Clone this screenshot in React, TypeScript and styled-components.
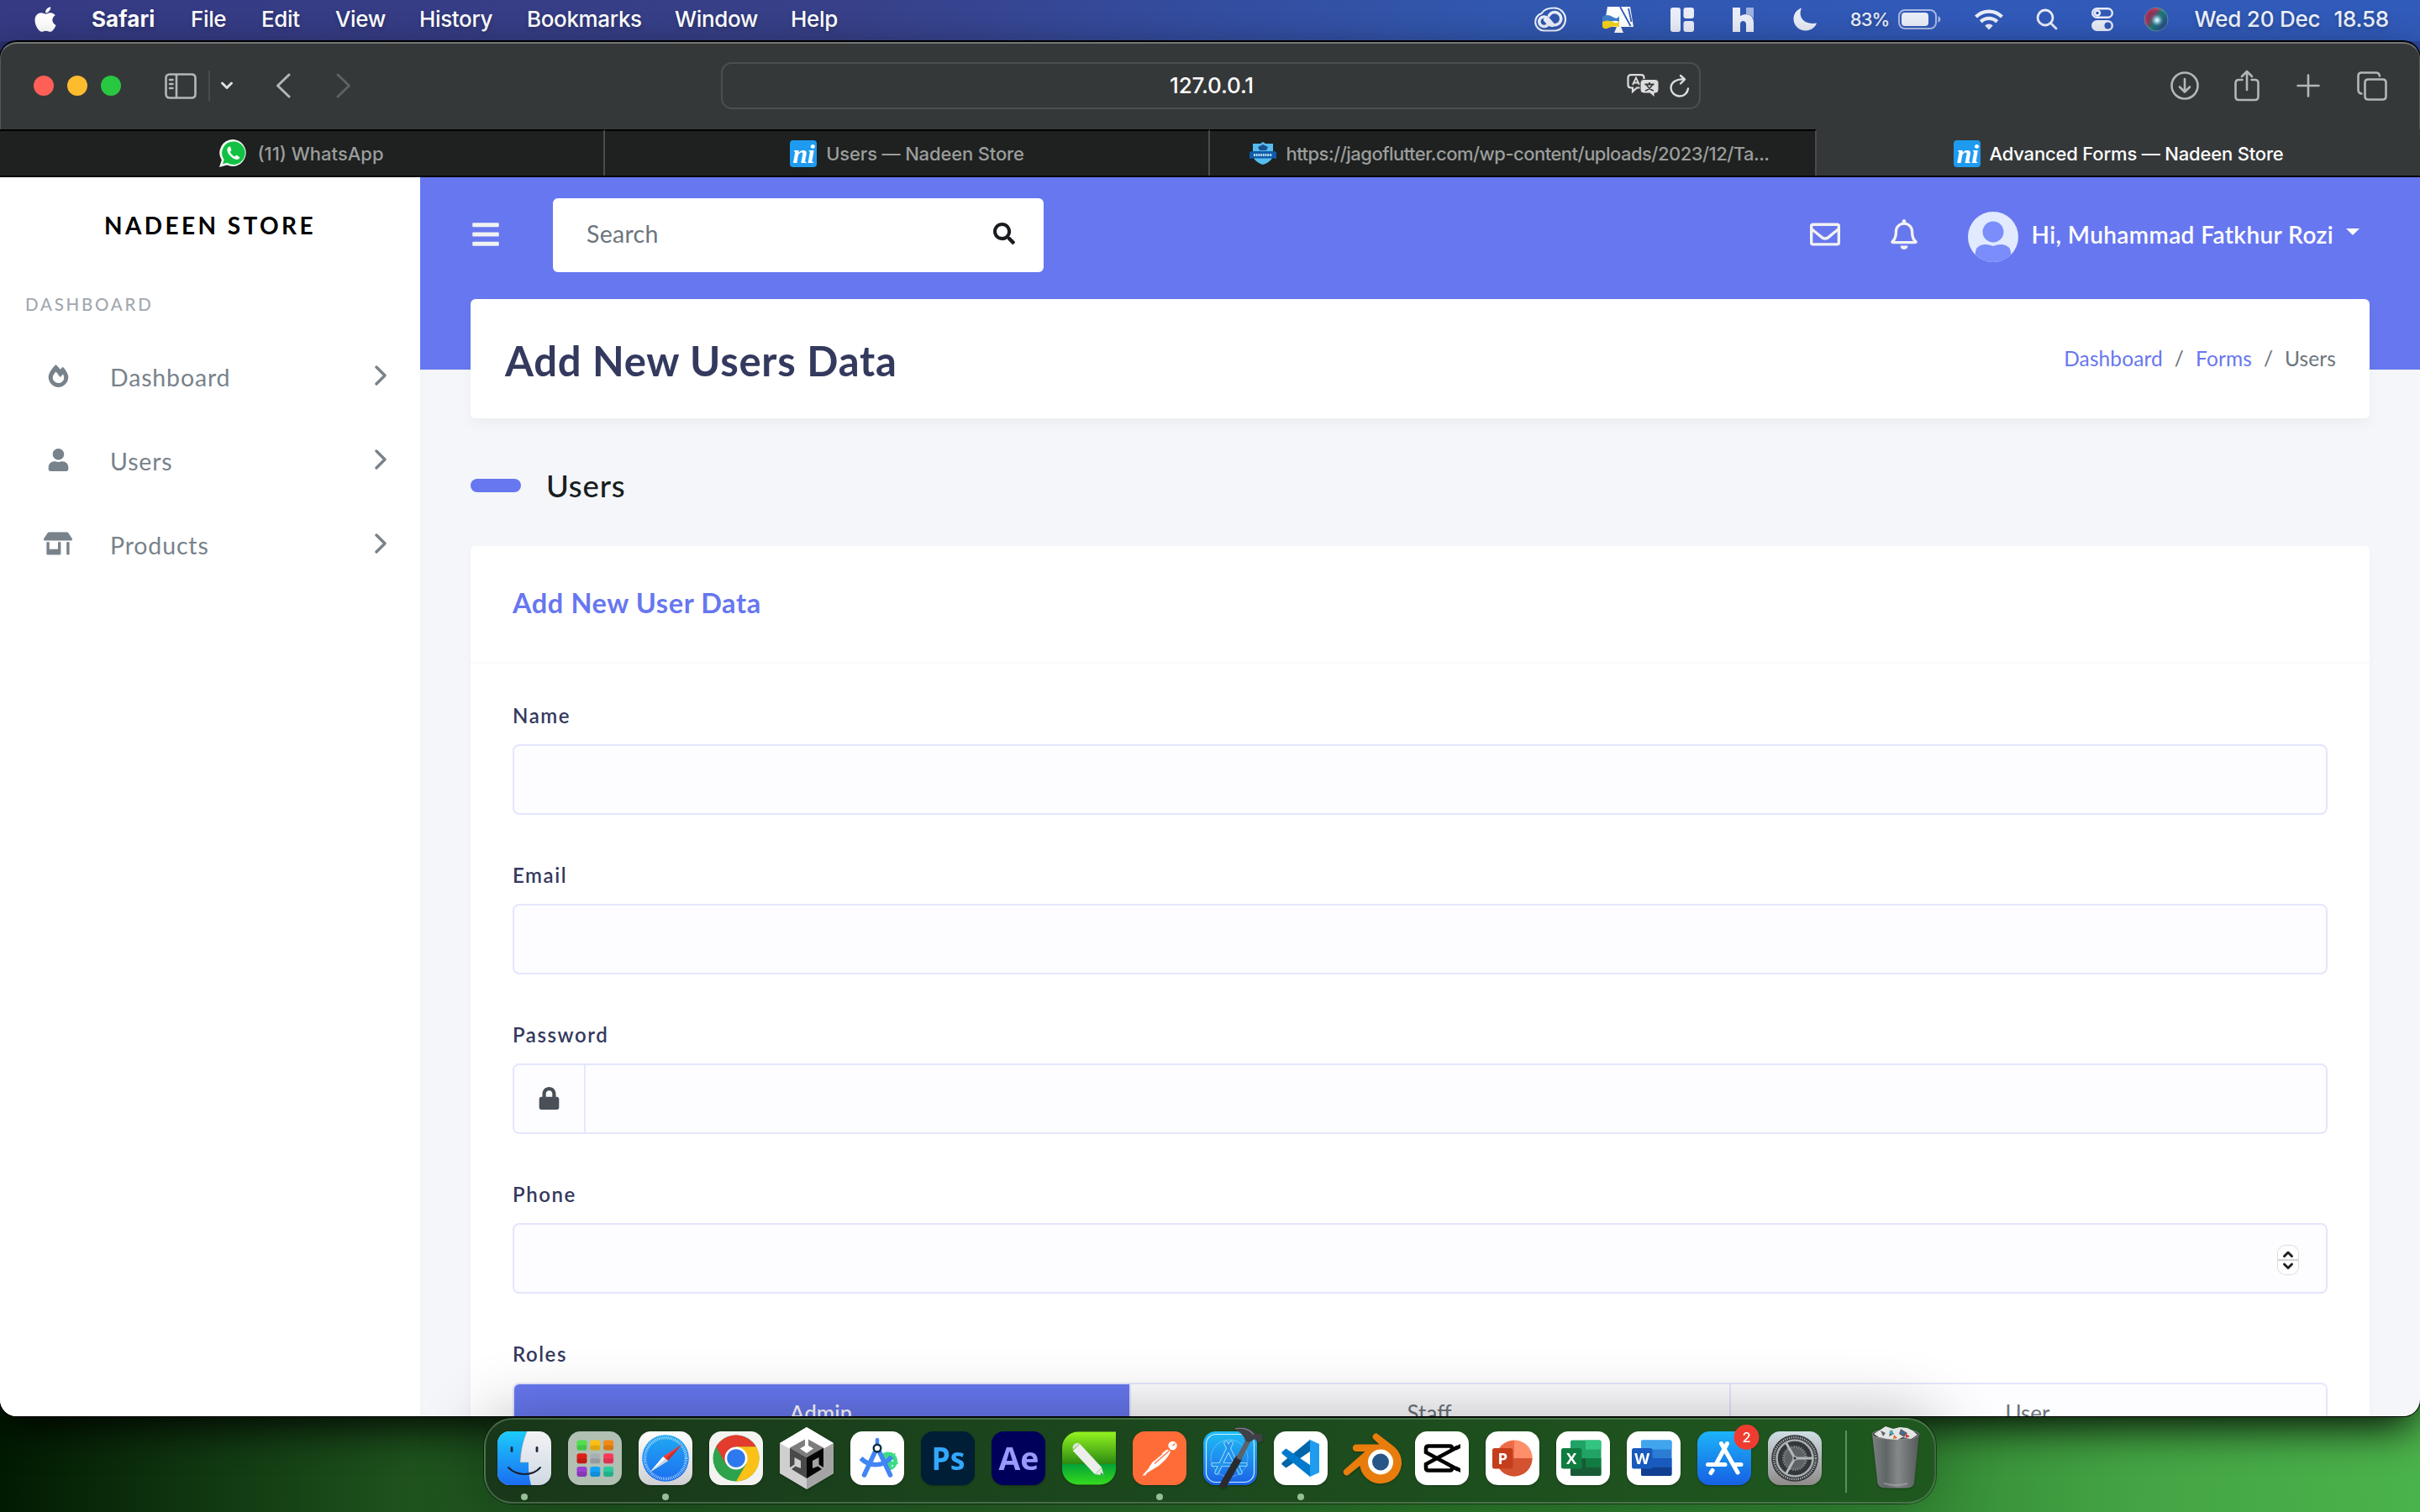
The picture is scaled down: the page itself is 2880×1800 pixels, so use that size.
import React from "react";
import styled, { createGlobalStyle, css } from "styled-components";
import {
  FaApple, FaFireAlt, FaUser, FaStoreAlt, FaSearch, FaBars, FaRegEnvelope, FaRegBell, FaLock,
} from "react-icons/fa";

const ui = `Inter, "Liberation Sans", sans-serif`;
const body = `Lato, "Open Sans", sans-serif`;
const primary = "#6777ef";

const Global = createGlobalStyle`
  *, *::before, *::after { box-sizing: border-box; }
  body { margin: 0; background: #1f4f1f; }
  svg { display: block; flex: none; }
`;

/* ---------- desktop ---------- */
const Desktop = styled.div`
  width: 2880px;
  height: 1800px;
  overflow: hidden;
  display: flex;
  flex-direction: column;
  background:
    linear-gradient(90deg, #2b3070 0, #2b3070 30%, #2d47a0 100%) top / 100% 120px no-repeat,
    linear-gradient(90deg, #011a02 0, #0e330e 7%, #1e531e 17%, #205820 28%, #266026 42%, #2b7a2b 60%, #338834 78%, #43a443 88%, #4bb34b 100%);
`;
const MenuBar = styled.header`
  flex: none;
  height: 49px;
  padding: 0 37px 3px 41px;
  display: flex;
  align-items: center;
  justify-content: space-between;
  background: linear-gradient(90deg, #353a83 0, #374088 35%, #344b9c 48%, #3157ae 62%, #3159b8 80%, #315bba 100%);
  color: #fff;
  font: 500 26px/46px ${ui};
  letter-spacing: -0.35px;
  text-shadow: 0 2px 5px rgba(0, 0, 0, 0.25);
`;
const MenuGroup = styled.div`
  display: flex;
  align-items: center;
`;
const AppleSlot = styled.span`
  width: 72px;
  margin-left: -4px;
`;
const MenuItem = styled.span<{ $w: number; $strong?: boolean }>`
  width: ${(p) => p.$w}px;
  white-space: nowrap;
  ${(p) => p.$strong && css`font-weight: 700; letter-spacing: 0.1px;`}
`;
const StatusIcon = styled.span<{ $gap: number }>`
  margin-right: ${(p) => p.$gap}px;
  color: #e9edf8;
`;
const Percent = styled.span`
  font-size: 22px;
  letter-spacing: -0.9px;
  margin-right: 10px;
  color: #e9edf8;
`;
const Clock = styled.span`
  display: flex;
  gap: 16px;
  white-space: pre;
  letter-spacing: -0.2px;
  color: #eef1fa;
`;

/* ---------- browser window ---------- */
const Window = styled.section`
  flex: none;
  height: 1637px;
  display: flex;
  flex-direction: column;
  border-radius: 20px;
  border-top: 1px solid #000;
  overflow: hidden;
  background: #353839;
  box-shadow: 0 0 0 1px #000, 0 18px 50px -6px rgba(0, 0, 0, 0.95);
`;
const Toolbar = styled.div`
  flex: none;
  height: 104px;
  padding: 0 38px 2px 39px;
  display: flex;
  align-items: center;
  justify-content: space-between;
  color: #b4b7b7;
  border-top: 2px solid #747777;
  border-left: 1px solid #55595a;
  border-right: 1px solid #55595a;
  border-radius: 20px 20px 0 0;
`;
const ToolSide = styled.div<{ $end?: boolean }>`
  width: 700px;
  display: flex;
  align-items: center;
  justify-content: ${(p) => (p.$end ? "flex-end" : "flex-start")};
`;
const Light = styled.i<{ $c: string }>`
  width: 24px;
  height: 24px;
  margin-right: 16px;
  border-radius: 50%;
  background: ${(p) => p.$c};
`;
const Slot = styled.span<{ $l?: number }>`
  margin-left: ${(p) => p.$l ?? 0}px;
`;
const ThinRule = styled.i`
  width: 2px;
  height: 36px;
  margin-left: 14px;
  background: #4a4d4e;
`;
const AddressBar = styled.div`
  width: 1166px;
  height: 56px;
  padding: 0 11px;
  display: grid;
  grid-template-columns: 1fr auto 1fr;
  align-items: center;
  border: 2px solid #4c4f50;
  border-radius: 13px;
  color: #fff;
  font: 500 26px/1 ${ui};
  letter-spacing: -0.15px;
`;
const AddressTools = styled.span`
  grid-column: 3;
  justify-self: end;
  display: flex;
  align-items: center;
  gap: 13px;
`;
const AddressText = styled.span`
  grid-column: 2;
  padding-left: 3px;
`;
const TabStrip = styled.div`
  flex: none;
  height: 57px;
  display: flex;
  border-bottom: 2px solid #050505;
`;
const Tab = styled.div<{ $w: number; $active?: boolean; $ls?: number; $pad?: string }>`
  width: ${(p) => p.$w}px;
  padding: ${(p) => p.$pad ?? "0 0 0 1px"};
  display: flex;
  align-items: center;
  justify-content: center;
  gap: ${(p) => (p.$active ? 10 : 11)}px;
  white-space: nowrap;
  font: 500 22px/54px ${ui};
  letter-spacing: ${(p) => p.$ls ?? 0}px;
  color: ${(p) => (p.$active ? "#fff" : "#9b9d9c")};
  background: ${(p) => (p.$active ? "#353839" : "#1e2120")};
  border-top: 2px solid ${(p) => (p.$active ? "#353839" : "#000")};
  border-right: ${(p) => (p.$active ? "none" : "2px solid #494c4c")};
`;
const Favicon = styled.i`
  width: 32px;
  height: 32px;
  border-radius: 4px;
  background: #1e9bf0;
  color: #fff;
  text-align: center;
  font: italic 700 32px/32px "Liberation Serif", serif;
  letter-spacing: -0.5px;
`;

/* ---------- page ---------- */
const Page = styled.div`
  flex: 1;
  min-height: 0;
  display: flex;
  overflow: hidden;
  background: #f4f6f9;
  font-family: ${body};
`;
const Sidebar = styled.aside`
  width: 500px;
  flex: none;
  background: #fff;
  box-shadow: 0 4px 8px rgba(0, 0, 0, 0.03);
`;
const Brand = styled.div`
  height: 115px;
  font-size: 28px;
  font-weight: 700;
  line-height: 115px;
  letter-spacing: 3.4px;
  text-align: center;
  color: #000;
`;
const MenuHeader = styled.div`
  height: 74px;
  padding-left: 30px;
  font-size: 20.5px;
  font-weight: 500;
  line-height: 73px;
  letter-spacing: 2.75px;
  color: #a1a8af;
`;
const NavItem = styled.a`
  height: 100px;
  padding: 0 40px 6px 41px;
  display: flex;
  align-items: center;
  color: #78828b;
  font-size: 28.5px;
  letter-spacing: 0.85px;
`;
const NavIcon = styled.span`
  width: 56px;
  margin-right: 34px;
  display: flex;
  justify-content: center;
`;
const NavLabel = styled.span`
  flex: 1;
  padding-top: 3px;
`;
const Main = styled.main`
  flex: 1;
  min-width: 0;
  padding: 0 60px;
  background: linear-gradient(${primary} 229px, transparent 229px);
`;
const Navbar = styled.nav`
  height: 145px;
  padding: 0 12px 8px 0;
  display: flex;
  align-items: center;
  color: #f2f2f2;
`;
const NavIconSlot = styled.span<{ $l?: number }>`
  margin: -2px 0 0 ${(p) => p.$l ?? 0}px;
`;
const SearchBox = styled.div`
  width: 584px;
  height: 88px;
  margin: 0 auto 0 62px;
  padding: 0 34px 3px 40px;
  display: flex;
  align-items: center;
  justify-content: space-between;
  border-radius: 6px;
  background: #fff;
  color: #6c757d;
  font-size: 28.5px;
  letter-spacing: 0.3px;
`;
const Account = styled.div`
  display: flex;
  align-items: center;
  margin-left: 58px;
  color: #fff;
  font-size: 28px;
  font-weight: 600;
  letter-spacing: 0.4px;
`;
const AvatarSlot = styled.span`
  padding-top: 5px;
`;
const Greeting = styled.span`
  margin: -2px 15px 0 16px;
`;
const Caret = styled.i`
  margin-top: -7px;
  border: 8px solid transparent;
  border-top-color: #fff;
  border-bottom: 0;
`;
const Panel = styled.section`
  border-radius: 6px;
  background: #fff;
  box-shadow: 0 4px 8px rgba(0, 0, 0, 0.03);
`;
const TitleCard = styled(Panel)`
  height: 142px;
  padding: 0 40px 0 41px;
  display: flex;
  align-items: center;
  justify-content: space-between;
  box-shadow: 0 8px 16px rgba(0, 0, 0, 0.035);
`;
const Title = styled.h1`
  margin: 0;
  padding-top: 3px;
  font-size: 49px;
  font-weight: 700;
  letter-spacing: 0.75px;
  color: #34395e;
`;
const Crumbs = styled.div`
  display: flex;
  gap: 14px;
  margin-top: -2px;
  font-size: 24.5px;
  font-weight: 400;
  letter-spacing: 0.1px;
  color: #6c757d;
`;
const CrumbLink = styled.a`
  color: ${primary};
`;
const SectionTitle = styled.h2`
  height: 152px;
  margin: 0;
  padding-top: 7px;
  display: flex;
  align-items: center;
  gap: 30px;
  font-size: 36.5px;
  font-weight: 500;
  letter-spacing: 0.8px;
  color: #191d21;
  &::before {
    content: "";
    width: 60px;
    height: 16px;
    border-radius: 8px;
    background: ${primary};
  }
`;
const CardHead = styled.div`
  height: 140px;
  padding: 0 50px;
  border-bottom: 2px solid #f9f9f9;
  font-size: 32.5px;
  font-weight: 700;
  line-height: 136px;
  letter-spacing: 0.6px;
  color: ${primary};
`;
const CardBody = styled.div`
  height: 1000px;
  padding: 36px 50px 0;
`;
const Field = styled.div`
  height: 190px;
`;
const Label = styled.label`
  display: block;
  height: 60px;
  font-size: 24px;
  font-weight: 600;
  line-height: 51px;
  letter-spacing: 1.55px;
  color: #34395e;
`;
const Input = styled.div`
  height: 84px;
  padding-right: 33px;
  display: flex;
  align-items: center;
  justify-content: flex-end;
  border: 2px solid #e4e6fc;
  border-radius: 8px;
  background: #fdfdff;
`;
const Addon = styled.span`
  width: 85px;
  height: 80px;
  margin-right: auto;
  padding-bottom: 2px;
  display: flex;
  align-items: center;
  justify-content: center;
  border-right: 2px solid #e4e6fc;
  color: #495057;
`;
const Stepper = styled.span`
  width: 24px;
  height: 34px;
  margin-top: 3px;
  display: flex;
  align-items: center;
  justify-content: center;
  border-radius: 9px;
  background: linear-gradient(#fff 47%, #d4d4d4 47%, #d4d4d4 53%, #fff 53%);
  box-shadow: 0 0 1px 1px rgba(0, 0, 0, 0.14);
`;
const Segments = styled.div`
  height: 84px;
  display: flex;
  border: 2px solid #e4e6fc;
  border-radius: 8px;
  overflow: hidden;
`;
const Segment = styled.span<{ $w: number; $on?: boolean }>`
  width: ${(p) => p.$w}px;
  padding-right: 2px;
  text-align: center;
  font-size: 26px;
  font-weight: ${(p) => (p.$on ? 500 : 400)};
  line-height: 69px;
  color: ${(p) => (p.$on ? "#fff" : "#6c757d")};
  background: ${(p) => (p.$on ? primary : "#fdfdff")};
  & + & { border-left: 2px solid #e4e6fc; }
`;

/* ---------- dock ---------- */
const DockRow = styled.footer`
  position: relative;
  flex: 1;
  display: flex;
  justify-content: center;
  align-items: flex-start;
`;
const DockBar = styled.div`
  width: 1728px;
  height: 102px;
  margin-top: 2px;
  padding: 14px 0 0 14px;
  display: flex;
  gap: 20px;
  border: 2px solid rgba(110, 150, 110, 0.5);
  border-radius: 34px;
  background: linear-gradient(90deg, #19371a, #1b431c 30%, #1d4c1e 60%, #1f581f);
  box-shadow: 0 0 0 1px rgba(0, 0, 0, 0.45), 0 0 80px rgba(0, 0, 0, 0.3);
`;
const DockItem = styled.div<{ $running?: boolean }>`
  width: 64px;
  height: 83px;
  flex: none;
  display: flex;
  flex-direction: column;
  align-items: center;
  justify-content: space-between;
  svg { overflow: visible; }
  ${(p) => p.$running && css`
    &::after {
      content: "";
      width: 8px;
      height: 8px;
      margin-bottom: 1px;
      border-radius: 50%;
      background: #96bf97;
    }
  `}
`;
const DockRule = styled.i`
  width: 2px;
  height: 74px;
  margin: -1px 6px 0 8px;
  background: #5a9159;
`;
const Art = styled.svg.attrs({ viewBox: "0 0 64 64", width: 64, height: 64 })`
  filter: drop-shadow(0 1px 1px rgba(0, 0, 0, 0.3));
`;

const Tile = ({ fill }: { fill: string }) => <rect width="64" height="64" rx="14.5" fill={fill} />;
const Grad = ({ id, a, b }: { id: string; a: string; b: string }) => (
  <linearGradient id={id} x1="0" y1="0" x2="0" y2="1">
    <stop offset="0" stopColor={a} />
    <stop offset="1" stopColor={b} />
  </linearGradient>
);

const Finder = () => (
  <Art>
    <defs>
      <Grad id="fa" a="#1ccbfc" b="#1b6df2" />
      <Grad id="fb" a="#f3f3f5" b="#cfd8e4" />
      <clipPath id="fc"><rect width="64" height="64" rx="14.5" /></clipPath>
    </defs>
    <g clipPath="url(#fc)">
      <rect width="64" height="64" fill="url(#fb)" />
      <path d="M0 0H35C30 12 27.5 24 27 37H37C36.5 46 38 56 40 64H0Z" fill="url(#fa)" />
      <path d="M35 0C30 12 27.5 24 27 37H37" fill="none" stroke="#7d8fa5" strokeOpacity=".5" />
    </g>
    <path d="M17 19.500v4M47 19.500v4" stroke="#1d2a3a" strokeWidth="2.800" strokeLinecap="round" />
    <path d="M13 43C23 53.500 42 53.500 51 43" fill="none" stroke="#16202c" strokeWidth="2" strokeLinecap="round" />
  </Art>
);
const padColors = ["#4fe04c", "#fdbf10", "#f48a16", "#dd1f16", "#a9b0b3", "#fb3b5c", "#9a3fd0", "#12a3f8", "#2cc99a"];
const Launchpad = () => (
  <Art>
    <Tile fill="#b1c0b3" />
    {padColors.map((c, i) => (
      <g key={c}>
        <rect x={10.5 + (i % 3) * 15.8} y={10.5 + Math.floor(i / 3) * 15.7} width="12" height="12" rx="2.800" fill={c} />
        <rect x={10.5 + (i % 3) * 15.8} y={16.5 + Math.floor(i / 3) * 15.7} width="12" height="6" rx="2.800" fill="#000" opacity=".12" />
      </g>
    ))}
  </Art>
);
const Safari = () => (
  <Art>
    <defs><Grad id="sa" a="#fff" b="#d0d0d2" /><Grad id="sb" a="#1fa9f3" b="#1d6ff0" /></defs>
    <Tile fill="url(#sa)" />
    <circle cx="32" cy="32" r="27.800" fill="url(#sb)" />
    <circle cx="32" cy="32" r="24.500" fill="none" stroke="#fff" strokeOpacity=".75" strokeWidth="3.500" strokeDasharray=".8 1.338" />
    <path d="M51.500 15.500L29 30L35 35Z" fill="#f0403a" />
    <path d="M51.500 15.500L32 32.500L35 35Z" fill="#c92c2c" />
    <path d="M13.500 48.500L29 30L35 35Z" fill="#fff" />
    <path d="M13.500 48.500L32 32.500L35 35Z" fill="#c9d3de" />
  </Art>
);
const Chrome = () => (
  <Art>
    <Tile fill="#f3f4f2" />
    <circle cx="32" cy="32" r="27.500" fill="#2fa24c" />
    <path d="M8.200 18.200A27.500 27.500 0 0 1 55.800 18.200H32L20 39Z" fill="#e33b2e" />
    <path d="M55.800 18.200A27.500 27.500 0 0 1 32 59.500L44 39L32 18.200Z" fill="#fcc116" />
    <circle cx="32" cy="32" r="13.500" fill="#fff" />
    <circle cx="32" cy="32" r="10.800" fill="#2f79ee" />
  </Art>
);
const Unity = () => (
  <Art>
    <path d="M32 -5L64 14V50L32 69L0 50V14Z" fill="#cfcfcf" />
    <path d="M32 -5L64 14L32 32L0 14Z" fill="#fff" />
    <path d="M64 14V50L32 69V32Z" fill="#a4a4a4" />
    <path d="M30 9.500L12 19.500L32 31L52 19.500L34 9.500V17L40 20.500L32 26L24 20.500L30 17Z" fill="#7d7d7d" />
    <path d="M12 19.500V43L17.500 39.500V31L25 35V44L18.500 41.500L14 45L32 56V31Z" fill="#4a4a4a" />
    <path d="M52 19.500V43L46.500 39.500V31L39 35V44L45.500 41.500L50 45L32 56V31Z" fill="#050505" />
  </Art>
);
const AndroidStudio = () => (
  <Art>
    <Tile fill="#fff" />
    <path d="M38 27A11 11 0 1 1 42 46Z" fill="#3ddc84" />
    <path d="M45 30L42 26M52 30L53 26M54 38H57" stroke="#3ddc84" strokeWidth="1.500" />
    <circle cx="50" cy="35" r="1" fill="#fff" /><circle cx="50" cy="41" r="1" fill="#fff" />
    <path d="M30.500 22L16.500 52M33.500 22L47.500 52" stroke="#4285f4" strokeWidth="5.500" strokeLinecap="round" />
    <path d="M12.500 32C22 42 40 43 49 30" fill="none" stroke="#4285f4" strokeWidth="5.500" />
    <path d="M32 10V17" stroke="#4285f4" strokeWidth="4.500" strokeLinecap="round" />
    <circle cx="32" cy="20" r="4.300" fill="#fff" stroke="#073042" strokeWidth="2.400" />
  </Art>
);
const Adobe = ({ bg, fg, text }: { bg: string; fg: string; text: string }) => (
  <Art>
    <Tile fill={bg} />
    <text x="32.500" y="45.500" textAnchor="middle" fontFamily="Open Sans" fontWeight="700" fontSize="38" fill={fg}
      textLength={text === "Ps" ? 40 : 48} lengthAdjust="spacingAndGlyphs">{text}</text>
  </Art>
);
const Corel = () => (
  <Art>
    <defs><Grad id="ca" a="#93f41f" b="#2c8a12" /><Grad id="cb" a="#04a238" b="#35dc1c" /></defs>
    <path d="M0 39V20A19 19 0 0 1 19 .5H64V39Z" fill="url(#ca)" />
    <path d="M0 39H64V44A19 19 0 0 1 45 63.500H19A19 19 0 0 1 0 44Z" fill="url(#cb)" />
    <path d="M17 19L43 47" stroke="#eceeec" strokeWidth="11.500" strokeLinecap="butt" />
    <path d="M13 21.500A5.700 5.700 0 0 1 21 14.500ZM38.800 51L47.300 43.200L49.500 52.500Z" fill="#dfe2df" />
    <path d="M46.500 49L50 53L45.500 51.500Z" fill="#129a2e" />
  </Art>
);
const Postman = () => (
  <Art>
    <Tile fill="#ff6c37" />
    <circle cx="47.500" cy="17" r="5.200" fill="#fff" />
    <path d="M47.500 17L50.500 14.500M44 20L40 23" stroke="#ff6c37" strokeWidth="1.200" />
    <path d="M41 21.500L45 24C43 30 37 36 31 41L17 49.500L15 52.500H11.500L19 44C23 36 29 30 41 21.500Z" fill="#fff" />
    <path d="M43 23.500L26 38.500M35 26.500L25 35" stroke="#ff6c37" strokeWidth="1.200" />
  </Art>
);
const Xcode = () => (
  <Art>
    <defs><Grad id="xa" a="#1fbdf5" b="#1a62e6" /></defs>
    <Tile fill="url(#xa)" />
    <rect x="3.500" y="3.500" width="57" height="57" rx="11.500" fill="none" stroke="#cdeefc" strokeWidth="1.200" />
    <circle cx="31" cy="32" r="22" fill="none" stroke="#fff" strokeOpacity=".3" />
    <g fill="none" stroke="#b5e2fa" strokeWidth="5.200" strokeLinecap="round"><path d="M33 14L16 49M27 14L44 49M12 39.500H50" /></g>
    <g fill="none" stroke="#1e93ee" strokeWidth="3.600" strokeLinecap="round"><path d="M33 14L16 49M27 14L44 49M12 39.500H50" /></g>
    <path d="M41.500 33L24 63.500" stroke="#2a2b2e" strokeWidth="8.500" strokeLinecap="round" />
    <path d="M53.500 11L42 33" stroke="#5d6266" strokeWidth="6" />
    <path d="M36 -3C44 -7 56 -5 62 2L70 4L71 11L66 14L61 9C58 12 54 14 50 11C49 5 43 0 36 -3Z" fill="#3e4145" />
    <path d="M38 -3C46 -5 55 -3 60 4" fill="none" stroke="#84888c" strokeWidth="1.200" />
  </Art>
);
const VSCode = () => (
  <Art>
    <Tile fill="#fff" />
    <path d="M43 10V24L14.500 43.500L9.500 39.500V37.500Z" fill="#0065a9" />
    <path d="M43 54V40L14.500 20.500L9.500 24.500V26.500Z" fill="#007acc" />
    <path d="M42 9.500L54 15V49L42 54.500Q43 53.500 43 51V13Q43 10.500 42 9.500Z" fill="#1f9cf0" />
  </Art>
);
const Blender = () => (
  <Art>
    <path d="M14 15.500H41.500L35 9.500A3.900 3.900 0 0 1 40 3.500L59.500 18.500A25 25 0 1 1 18.300 41L4.500 52A4 4 0 0 1 0 45.500L24.500 24H14A4.200 4.200 0 0 1 14 15.500Z" fill="#e87d0d" />
    <circle cx="43" cy="36.500" r="15" fill="#fff" />
    <circle cx="43" cy="36.500" r="10" fill="#265787" />
  </Art>
);
const CapCut = () => (
  <Art>
    <Tile fill="#fff" />
    <path d="M44 21V20Q44 17.500 41.500 17.500H16Q13 17.500 13 20.500V25L51 45.500M44 43V44Q44 46.500 41.500 46.500H16Q13 46.500 13 43.500V39L51 18.500"
      fill="none" stroke="#000" strokeWidth="4.600" />
    <path d="M54 15V20L49 22.500V17.500ZM54 49V44L49 41.500V46.500Z" fill="#000" />
  </Art>
);
const OfficeBadge = ({ color, x, letter }: { color: string; x: number; letter: string }) => (
  <>
    <rect x={x} y="20" width="24.500" height="24.500" rx="2.500" fill={color} />
    <text x={x + 12.2} y="39" textAnchor="middle" fontFamily="Open Sans" fontWeight="700" fontSize="18.500" fill="#fff">{letter}</text>
  </>
);
const PowerPoint = () => (
  <Art>
    <Tile fill="#fff" />
    <circle cx="34" cy="32" r="21.500" fill="#ed6c47" />
    <path d="M34 10.500A21.500 21.500 0 0 1 55.500 32H34Z" fill="#ff8f6b" />
    <path d="M12.500 32H55.500A21.500 21.500 0 0 1 12.500 32Z" fill="#d35230" />
    <OfficeBadge color="#c43e1c" x={8} letter="P" />
  </Art>
);
const Excel = () => (
  <Art>
    <Tile fill="#fff" />
    <rect x="17" y="10.500" width="36.500" height="42.500" rx="2" fill="#21a366" />
    <path d="M35 10.500H51.500Q53.500 10.500 53.500 12.500V21.500H35Z" fill="#33c481" />
    <path d="M17 32H35V53H19Q17 53 17 51Z" fill="#185c37" /><path d="M35 32H53.500V42.500H35Z" fill="#107c41" />
    <path d="M35 42.500H53.500V51Q53.500 53 51.500 53H35Z" fill="#185c37" />
    <OfficeBadge color="#107c41" x={6} letter="X" />
  </Art>
);
const Word = () => (
  <Art>
    <Tile fill="#fff" />
    <rect x="17" y="10.500" width="36.500" height="42.500" rx="2" fill="#2b7cd3" />
    <path d="M17 21.500V12.500Q17 10.500 19 10.500H51.500Q53.500 10.500 53.500 12.500V21.500Z" fill="#41a5ee" />
    <path d="M17 32H53.500V42.500H17Z" fill="#185abd" />
    <path d="M17 42.500H53.500V51Q53.500 53 51.500 53H19Q17 53 17 51Z" fill="#103f91" />
    <OfficeBadge color="#185abd" x={6} letter="W" />
  </Art>
);
const AppStore = () => (
  <Art>
    <defs><Grad id="aa" a="#1cb4f8" b="#1660e4" /></defs>
    <Tile fill="url(#aa)" />
    <g stroke="#fff" strokeWidth="5" strokeLinecap="round"><path d="M35.500 14.500L23 37.500M28.500 14.500L48 49M12.500 39.500H33M43 39.500H52M18 46.500L16 49.500" /></g>
    <circle cx="58.500" cy="7" r="15" fill="#f03c30" />
    <text x="58.500" y="13" textAnchor="middle" fontFamily="Inter" fontWeight="500" fontSize="16.500" fill="#fff">2</text>
  </Art>
);
const Settings = () => (
  <Art>
    <defs><Grad id="ga" a="#cfdde4" b="#8f8c8a" /></defs>
    <Tile fill="url(#ga)" />
    <circle cx="32" cy="32" r="27.800" fill="#34373a" />
    <circle cx="32" cy="32" r="25" fill="none" stroke="#aab0b3" strokeWidth="2.500" strokeDasharray="1.300 1.318" />
    <circle cx="32" cy="32" r="21.500" fill="none" stroke="#a9aeb1" strokeWidth="2.600" />
    <circle cx="32" cy="32" r="13.500" fill="#5e6265" stroke="#7f8487" strokeWidth="3" strokeDasharray="1.500 1.300" />
    <path d="M32 32H54M32 32L21.500 13.500M32 32L21.500 50.500" stroke="#b4b9bc" strokeWidth="3" />
    <circle cx="32" cy="32" r="3" fill="#9da2a5" /><circle cx="32" cy="32" r="1.200" fill="#222" />
  </Art>
);
const Trash = () => (
  <Art>
    <defs>
      <linearGradient id="ta"><stop offset="0" stopColor="#7a7f80" /><stop offset=".3" stopColor="#606566" /><stop offset=".55" stopColor="#85898a" /><stop offset="1" stopColor="#54595a" /></linearGradient>
    </defs>
    <path d="M4 3L60 3L54 62Q53 67 45 67.500H19Q12 67 10.500 62Z" fill="url(#ta)" />
    <ellipse cx="32" cy="3.500" rx="28" ry="6" fill="#3e4243" stroke="#8b8f90" />
    <path d="M6 3L14 -2L20 -6L29 -3L37 -5L46 -4L52 -1L58 4L50 9L40 7L34 10L22 9L12 7Z" fill="#e4e6e6" />
    <path d="M14 -1L20 2L17 6ZM38 -3L46 2L42 7L36 3ZM26 -2L30 3L24 6Z" fill="#5b6468" />
    <path d="M24 1L29 -1L28 4Z" fill="#37b7c9" /><path d="M30 4L34 8L29 9Z" fill="#e2702c" /><path d="M44 3L49 6L44 8Z" fill="#cf3a36" /><path d="M38 0L42 1L39 4Z" fill="#2f6fc4" />
    <path d="M18 62Q32 66 46 62" stroke="#a9adae" strokeWidth="2" fill="none" opacity=".6" />
  </Art>
);

const dock: { name: string; icon: React.ReactNode; running?: boolean }[] = [
  { name: "finder", icon: <Finder />, running: true },
  { name: "launchpad", icon: <Launchpad /> },
  { name: "safari", icon: <Safari />, running: true },
  { name: "chrome", icon: <Chrome /> },
  { name: "unity", icon: <Unity /> },
  { name: "android-studio", icon: <AndroidStudio /> },
  { name: "photoshop", icon: <Adobe bg="#001e36" fg="#31a8ff" text="Ps" /> },
  { name: "after-effects", icon: <Adobe bg="#00005b" fg="#9999ff" text="Ae" /> },
  { name: "corel", icon: <Corel /> },
  { name: "postman", icon: <Postman />, running: true },
  { name: "xcode", icon: <Xcode /> },
  { name: "vscode", icon: <VSCode />, running: true },
  { name: "blender", icon: <Blender /> },
  { name: "capcut", icon: <CapCut /> },
  { name: "powerpoint", icon: <PowerPoint /> },
  { name: "excel", icon: <Excel /> },
  { name: "word", icon: <Word /> },
  { name: "app-store", icon: <AppStore /> },
  { name: "settings", icon: <Settings /> },
];

/* ---------- line icons ---------- */
type LineProps = { w: number; h: number; d: string; sw?: number; color?: string };
const Line = ({ w, h, d, sw = 2.6, color = "currentColor" }: LineProps) => (
  <svg width={w} height={h} viewBox={`0 0 ${w} ${h}`} fill="none" stroke={color} strokeWidth={sw} strokeLinecap="round" strokeLinejoin="round">
    <path d={d} />
  </svg>
);

const menus: [string, number][] = [
  ["File", 84], ["Edit", 88], ["View", 100], ["History", 128], ["Bookmarks", 176], ["Window", 138], ["Help", 60],
];

const StatusIcons = () => (
  <>
    <StatusIcon $gap={42}>
      <svg width="40" height="30" viewBox="0 0 40 30" fill="none" stroke="currentColor">
        <path d="M24 1.500A13.500 13.500 0 1 1 25 28.500H12A10.500 10.500 0 0 1 9.500 8C12 4 17 1.500 24 1.500Z" strokeWidth="2.200" />
        <path d="M22.500 22.500C19 22.500 18 20.500 13.500 15.500M17 21.500A5.800 5.800 0 1 1 17 14L23.500 21.500A7.600 7.600 0 1 0 18.500 10.500" strokeWidth="3.600" strokeLinecap="round" />
      </svg>
    </StatusIcon>
    <StatusIcon $gap={43}>
      <svg width="38" height="34" viewBox="0 0 38 34">
        <path d="M6 2H33L37 26H2Z" fill="#fff" />
        <path d="M21 2L33.500 25M31 4L34.500 20" stroke="#3159b8" strokeWidth="1.800" fill="none" />
        <path d="M0 14Q6 10 12 14T20 13V20Q14 17 8 21T0 20Z" fill="#3f7fc8" />
        <path d="M0 20Q6 17 12 20T20 19V26Q14 24 8 27T0 26Z" fill="#f5d21c" />
        <path d="M17 26H22L25 33H14Z" fill="#fff" />
      </svg>
    </StatusIcon>
    <StatusIcon $gap={46}>
      <svg width="28" height="29" viewBox="0 0 28 29" fill="currentColor">
        <rect width="12" height="29" rx="3" /><rect x="15.500" width="12.500" height="13" rx="3" /><rect x="15.500" y="16" width="12.500" height="13" rx="3" />
      </svg>
    </StatusIcon>
    <StatusIcon $gap={47}>
      <svg width="25" height="29" viewBox="0 0 25 29" fill="currentColor">
        <path d="M0 0H9V10Q12 8 16 8Q25 9 25 18V29H16V19Q15 16 12.500 16Q9 16 9 20V29H0Z" />
        <path d="M16 0H25V13Q22 8.500 16 8Z" opacity=".6" />
      </svg>
    </StatusIcon>
    <StatusIcon $gap={39}>
      <svg width="29" height="28" viewBox="0 0 29 28" fill="currentColor"><path d="M10 .5C5 12 14 21 28 18.500C26 24 21 27.500 15 27.500C7 27.500 .5 21.500 .5 13.500C.5 7 4.500 2.500 10 .5Z" /></svg>
    </StatusIcon>
    <Percent>83%</Percent>
    <StatusIcon $gap={40}>
      <svg width="51" height="24" viewBox="0 0 51 24">
        <rect x="1" y="1" width="44" height="22" rx="7" fill="none" stroke="#a8b8e2" strokeWidth="2" />
        <rect x="4" y="4" width="32" height="16" rx="4" fill="currentColor" /><path d="M47.500 8Q50.500 9.500 50.500 12T47.500 16Z" fill="#a8b8e2" />
      </svg>
    </StatusIcon>
    <StatusIcon $gap={39}>
      <svg width="34" height="25" viewBox="0 0 34 25" fill="none" stroke="currentColor" strokeWidth="4.400">
        <path d="M1.500 9A22 22 0 0 1 32.500 9M7.300 14.800A14 14 0 0 1 26.700 14.800" />
        <path d="M17 24.500L12.300 19.500A6.700 6.700 0 0 1 21.700 19.500Z" fill="currentColor" stroke="none" />
      </svg>
    </StatusIcon>
    <StatusIcon $gap={40}><Line w={26} h={26} sw={2.8} d="M20 11A9 9 0 1 1 2 11A9 9 0 1 1 20 11M17.500 17.500L24 24" /></StatusIcon>
    <StatusIcon $gap={36}>
      <svg width="26" height="28" viewBox="0 0 26 28" fill="none" stroke="currentColor" strokeWidth="2.400">
        <rect x="1.200" y="1.200" width="23.600" height="10.600" rx="5.300" /><circle cx="7" cy="6.500" r="3" />
        <rect x="0" y="15" width="26" height="13" rx="6.500" fill="currentColor" stroke="none" /><circle cx="19.500" cy="21.500" r="4" fill="#3159b8" stroke="none" />
      </svg>
    </StatusIcon>
    <StatusIcon $gap={31}>
      <svg width="30" height="30" viewBox="0 0 30 30">
        <defs>
          <radialGradient id="si"><stop offset="0" stopColor="#fff" /><stop offset=".25" stopColor="#a6dcf2" stopOpacity=".8" /><stop offset=".65" stopColor="#27355f" stopOpacity=".35" /></radialGradient>
          <linearGradient id="sj" x1="0" y1="0" x2="1" y2=".7"><stop offset="0" stopColor="#6d2a5c" /><stop offset=".35" stopColor="#c9355a" /><stop offset=".6" stopColor="#1c9a80" /><stop offset="1" stopColor="#2b4da0" /></linearGradient>
        </defs>
        <circle cx="15" cy="15" r="14" fill="url(#sj)" stroke="#5a86a8" /><circle cx="16" cy="16" r="12" fill="url(#si)" />
      </svg>
    </StatusIcon>
  </>
);

const WhatsApp = () => (
  <svg width="34" height="33" viewBox="0 0 34 33">
    <path d="M17 0A16 16 0 1 1 9 30.500L0 33L2.800 24.500A16 16 0 0 1 17 0Z" fill="#f4faf4" />
    <path d="M17 2.500A13.700 13.700 0 1 1 9.500 27.700L4 29.200L5.600 24A13.700 13.700 0 0 1 17 2.500Z" fill="#12c143" />
    <path d="M11.500 8.500C8 11 9 16 14 20.500C18.500 24.500 23 25 24.500 21.500L20.500 18.500L18.500 20.500C16 19.500 13.500 17 12.800 14.800L14.500 13L13 8.500Z" fill="#fff" />
  </svg>
);
const Jago = () => (
  <svg width="32" height="27" viewBox="0 0 32 27">
    <path d="M16 0L19 2H28V15C28 21 22 25 16 27C10 25 4 21 4 15V2H13Z" fill="#55bdf0" />
    <path d="M10 6L16 3L22 6L20 10H12Z" fill="#1b4f8c" />
    <path d="M0 12L3 11H29L32 12V20L29 19.500H3L0 20Z" fill="#0f5ca8" />
    <path d="M5 15.500H27" stroke="#bfe2f7" strokeWidth="3" strokeDasharray="1.800 .9" />
  </svg>
);
const Translate = () => (
  <svg width="38" height="28" viewBox="0 0 38 28">
    <path d="M5 1.200H17Q20.500 1.200 20.500 4.500V13Q20.500 16.500 17 16.500H12L7 21V16.500H5Q1.500 16.500 1.500 13V4.500Q1.500 1.200 5 1.200Z" fill="none" stroke="#dcdddd" strokeWidth="2.200" />
    <path d="M7 13L11 4.500L15 13M8.500 10.500H13.500" fill="none" stroke="#dcdddd" strokeWidth="1.800" />
    <path d="M20 6.500H34Q38 6.500 38 10.500V19Q38 23 34 23H33V28L27.500 23H20Q16 23 16 19V10.500Q16 6.500 20 6.500Z" fill="#dcdddd" stroke="#353839" strokeWidth="1" />
    <path d="M21.500 12.500H32.500M27 10V12.500M30.500 12.500Q28 18 22 20M23.500 12.500Q26 18 32 20" fill="none" stroke="#353839" strokeWidth="1.800" />
  </svg>
);
const Avatar = () => (
  <svg width="60" height="60" viewBox="0 0 60 60">
    <defs><clipPath id="av"><circle cx="30" cy="30" r="30" /></clipPath></defs>
    <g clipPath="url(#av)">
      <rect width="60" height="60" fill="#e1eafe" />
      <circle cx="30" cy="24" r="12.500" fill="#7a8dfb" />
      <path d="M8.500 60V51Q9 40 19 39Q24 38.500 30 41Q36 38.500 41 39Q51 40 51.500 51V60Z" fill="#7a8dfb" />
    </g>
  </svg>
);

const navItems = [
  { label: "Dashboard", icon: <FaFireAlt size={27} /> },
  { label: "Users", icon: <FaUser size={27} /> },
  { label: "Products", icon: <FaStoreAlt size={34} /> },
];

export default function App() {
  return (
    <Desktop>
      <Global />
      <MenuBar>
        <MenuGroup>
          <AppleSlot><FaApple size={34} /></AppleSlot>
          <MenuItem $w={118} $strong>Safari</MenuItem>
          {menus.map(([label, w]) => <MenuItem key={label} $w={w}>{label}</MenuItem>)}
        </MenuGroup>
        <MenuGroup>
          <StatusIcons />
          <Clock><span>Wed 20 Dec</span><span>18.58</span></Clock>
        </MenuGroup>
      </MenuBar>

      <Window>
        <Toolbar>
          <ToolSide>
            <Light $c="#ff5f57" /><Light $c="#febb2e" /><Light $c="#28c840" />
            <Slot $l={36}>
              <Line w={38} h={31} sw={2.6} d="M6 1.500H32Q36.500 1.500 36.500 6V25Q36.500 29.500 32 29.500H6Q1.500 29.500 1.500 25V6Q1.500 1.500 6 1.500ZM14 2V29M6 8H9.500M6 13H9.500M6 18H9.500" />
            </Slot>
            <ThinRule />
            <Slot $l={12}><Line w={16} h={12} sw={3} color="#dfe0e0" d="M2.500 3L8 8.500L13.500 3" /></Slot>
            <Slot $l={50}><Line w={18} h={30} sw={3} d="M16 2L2.500 15L16 28" /></Slot>
            <Slot $l={54}><Line w={18} h={30} sw={3} color="#5e6162" d="M2 2L15.500 15L2 28" /></Slot>
          </ToolSide>
          <AddressBar>
            <AddressText>127.0.0.1</AddressText>
            <AddressTools>
              <Translate />
              <Line w={24} h={29} sw={2.4} color="#dcdddd" d="M13 2L18 6.500L13 11.500M17.500 6.600C8 5.500 1.500 10 1.500 17A10.300 10.300 0 0 0 22 17.500" />
            </AddressTools>
          </AddressBar>
          <ToolSide $end>
            <Line w={34} h={34} d="M32.500 17A15.500 15.500 0 1 1 1.500 17A15.500 15.500 0 1 1 32.500 17M17 9V24M11 18.500L17 24.500L23 18.500" />
            <Slot $l={42}><Line w={30} h={38} d="M9.500 12H5.500Q1.500 12 1.500 16V32Q1.500 36 5.500 36H24.500Q28.500 36 28.500 32V16Q28.500 12 24.500 12H20.500M15 24V2M9 8L15 2L21 8" /></Slot>
            <Slot $l={44}><Line w={28} h={28} d="M14 1.500V26.500M1.500 14H26.500" /></Slot>
            <Slot $l={44}><Line w={36} h={35} d="M12.500 9.500H30.500Q34.500 9.500 34.500 13.500V29.500Q34.500 33.500 30.500 33.500H13.500Q9.500 33.500 9.500 29.500V13.500Q9.500 9.500 13.500 9.500M5.500 26.500Q1.500 26 1.500 22V5.500Q1.500 1.500 5.500 1.500H22.500Q26.500 1.500 27 5.500" /></Slot>
          </ToolSide>
        </Toolbar>

        <TabStrip>
          <Tab $w={720} $pad="0"><WhatsApp /><span>(11) WhatsApp</span></Tab>
          <Tab $w={720} $ls={-0.15}><Favicon>ni</Favicon><span>Users — Nadeen Store</span></Tab>
          <Tab $w={722} $ls={-0.52} $pad="0 7px 0 0"><Jago /><span>https://jagoflutter.com/wp-content/uploads/2023/12/Ta...</span></Tab>
          <Tab $w={718} $ls={-0.18} $active><Favicon>ni</Favicon><span>Advanced Forms — Nadeen Store</span></Tab>
        </TabStrip>

        <Page>
          <Sidebar>
            <Brand>NADEEN STORE</Brand>
            <MenuHeader>DASHBOARD</MenuHeader>
            {navItems.map((n) => (
              <NavItem key={n.label}>
                <NavIcon>{n.icon}</NavIcon>
                <NavLabel>{n.label}</NavLabel>
                <Line w={14} h={24} sw={3.4} d="M2 2L12 12L2 22" />
              </NavItem>
            ))}
          </Sidebar>

          <Main>
            <Navbar>
              <NavIconSlot><FaBars size={36} /></NavIconSlot>
              <SearchBox><span>Search</span><FaSearch size={26} color="#191d21" /></SearchBox>
              <NavIconSlot><FaRegEnvelope size={36} /></NavIconSlot>
              <NavIconSlot $l={58}><FaRegBell size={36} /></NavIconSlot>
              <Account><AvatarSlot><Avatar /></AvatarSlot><Greeting>Hi, Muhammad Fatkhur Rozi</Greeting><Caret /></Account>
            </Navbar>

            <TitleCard>
              <Title>Add New Users Data</Title>
              <Crumbs>
                <CrumbLink>Dashboard</CrumbLink><span>/</span><CrumbLink>Forms</CrumbLink><span>/</span><span>Users</span>
              </Crumbs>
            </TitleCard>

            <SectionTitle>Users</SectionTitle>

            <Panel>
              <CardHead>Add New User Data</CardHead>
              <CardBody>
                <Field><Label>Name</Label><Input /></Field>
                <Field><Label>Email</Label><Input /></Field>
                <Field><Label>Password</Label><Input><Addon><FaLock size={27} /></Addon></Input></Field>
                <Field>
                  <Label>Phone</Label>
                  <Input>
                    <Stepper><Line w={14} h={24} sw={3} color="#222" d="M2.500 7.500L7 3L11.500 7.500M2.500 17L7 21.500L11.500 17" /></Stepper>
                  </Input>
                </Field>
                <Field>
                  <Label>Roles</Label>
                  <Segments>
                    <Segment $w={732} $on>Admin</Segment>
                    <Segment $w={714}>Staff</Segment>
                    <Segment $w={710}>User</Segment>
                  </Segments>
                </Field>
              </CardBody>
            </Panel>
          </Main>
        </Page>
      </Window>

      <DockRow>
        <DockBar>
          {dock.map((d) => <DockItem key={d.name} $running={d.running}>{d.icon}</DockItem>)}
          <DockRule />
          <DockItem><Trash /></DockItem>
        </DockBar>
      </DockRow>
    </Desktop>
  );
}
